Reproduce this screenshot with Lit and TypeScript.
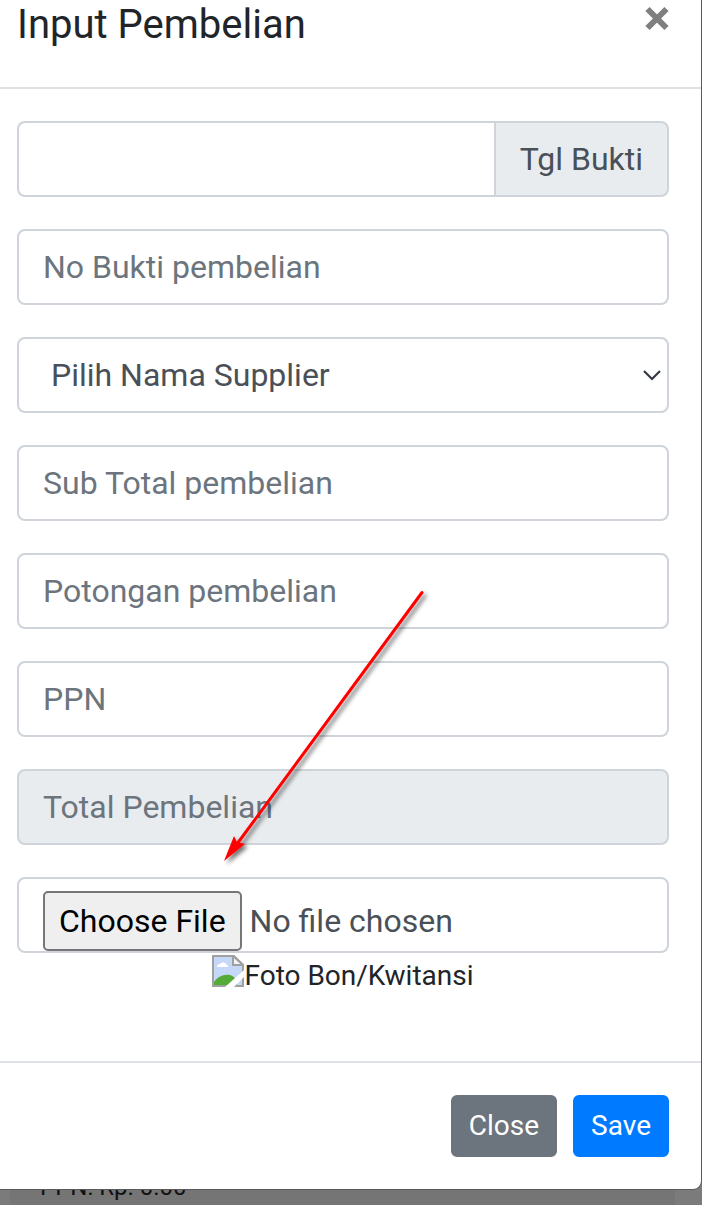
import { LitElement, html, css } from "lit";
import { customElement } from "lit/decorators.js";

@customElement("app-root")
export class AppRoot extends LitElement {
  static styles = css`
    :host {
      display: flex;
      flex-direction: column;
      position: relative;
      min-height: 100vh;
      overflow: hidden;
      box-sizing: border-box;
      background: #7b7b7b;
      color: #212529;
      font-family: Roboto, "Liberation Sans", sans-serif;
      font-size: 28px;
      line-height: 42px;
    }
    * {
      box-sizing: border-box;
    }
    .modal {
      position: relative;
      z-index: 1;
      margin-right: 1px;
      background: #fff;
      border-bottom-right-radius: 8px;
      box-shadow: 0 0 0 1px #5a5a5a;
    }
    .header {
      display: flex;
      justify-content: space-between;
      align-items: flex-start;
      height: 89px;
      padding-right: 32px;
      padding-left: 17px;
      border-bottom: 2px solid #dee2e6;
    }
    .title {
      margin: 0;
      font-size: 40px;
      font-weight: 400;
      line-height: 50px;
    }
    .dismiss {
      display: flex;
      padding: 6px 0;
      border: 0;
      background: none;
      color: #7f7f7f;
    }
    .body {
      display: flex;
      flex-direction: column;
      gap: 32px;
      padding: 32px 32px 64px 17px;
    }
    .control {
      display: block;
      width: 100%;
      min-width: 0;
      height: 76px;
      margin: 0;
      padding: 12px 24px;
      border: 2px solid #ced4da;
      border-radius: 8px;
      background: #fff;
      color: #495057;
      font: inherit;
      font-size: 32px;
      line-height: 48px;
      outline: 0;
    }
    .control::placeholder {
      color: #6c757d;
      opacity: 1;
    }
    .control:disabled {
      background: #e9ecef;
    }
    .group {
      display: flex;
    }
    .group .control {
      flex: 1;
      border-right: 0;
      border-radius: 8px 0 0 8px;
    }
    .addon {
      padding: 12px 24px;
      border: 2px solid #ced4da;
      border-radius: 0 8px 8px 0;
      background: #e9ecef;
      color: #495057;
      font-size: 32px;
      line-height: 48px;
    }
    .picker {
      display: grid;
      align-items: center;
    }
    .picker > * {
      grid-area: 1 / 1;
    }
    .select {
      appearance: none;
      padding-left: 32px;
    }
    .chevron {
      justify-self: end;
      margin-right: 7px;
      pointer-events: none;
    }
    .file {
      padding-bottom: 0;
      overflow: hidden;
    }
    .file::file-selector-button {
      height: 60px;
      margin: 0 8px 0 0;
      padding: 0 14px;
      border: 2px solid #767676;
      border-radius: 5px;
      background: #efefef;
      color: #000;
      font: inherit;
    }
    .preview {
      display: flex;
      justify-content: center;
      align-items: flex-start;
      padding-top: 2px;
    }
    .footer {
      display: flex;
      justify-content: flex-end;
      gap: 16px;
      padding: 32px 32px 32px 17px;
      border-top: 2px solid #dee2e6;
    }
    .btn {
      padding: 8px 16px;
      border: 2px solid #6c757d;
      border-radius: 6px;
      background: #6c757d;
      color: #fff;
      font: inherit;
    }
    .primary {
      border-color: #007bff;
      background: #007bff;
    }
    .behind {
      flex: 1 0 0;
      height: 38px;
      margin: -22px 27px 0 10px;
      padding-left: 30px;
      overflow: hidden;
      background: #757575;
      color: #111;
      font-size: 24px;
      line-height: 40px;
    }
    .navbar {
      position: absolute;
      top: 0;
      right: 0;
      width: 100%;
      height: 59px;
      background: #123047;
    }
    .arrow {
      position: absolute;
      z-index: 2;
      top: 580px;
      left: 210px;
      pointer-events: none;
    }
  `;

  render() {
    return html`
      <div class="navbar"></div>
      <form class="modal" @submit=${(e: Event) => e.preventDefault()}>
        <header class="header">
          <h5 class="title">Input Pembelian</h5>
          <button class="dismiss" type="button" aria-label="Close">
            <svg width="24" height="25" viewBox="0 0 24 25">
              <path d="M2.5 3 21.5 22M21.5 3 2.5 22" stroke="currentColor" stroke-width="6" />
            </svg>
          </button>
        </header>
        <div class="body">
          <div class="group">
            <input class="control" id="tgl" type="text" />
            <label class="addon" for="tgl">Tgl Bukti</label>
          </div>
          <input class="control" type="text" placeholder="No Bukti pembelian" aria-label="No Bukti pembelian" />
          <div class="picker">
            <select class="control select" aria-label="Supplier">
              <option>Pilih Nama Supplier</option>
            </select>
            <svg class="chevron" width="20" height="12" viewBox="0 0 20 12">
              <path d="M2 2 10 10 18 2" fill="none" stroke="#343a40" stroke-width="2.2" />
            </svg>
          </div>
          <input class="control" type="text" placeholder="Sub Total pembelian" aria-label="Sub Total pembelian" />
          <input class="control" type="text" placeholder="Potongan pembelian" aria-label="Potongan pembelian" />
          <input class="control" type="text" placeholder="PPN" aria-label="PPN" />
          <input class="control" type="text" placeholder="Total Pembelian" aria-label="Total Pembelian" disabled />
          <div>
            <input class="control file" type="file" aria-label="Foto Bon/Kwitansi" />
            <div class="preview">
              <svg width="32" height="32" viewBox="0 0 32 32">
                <path d="M1 1H22L31 10V31H1Z" fill="#c5d8f8" stroke="#a0a0a0" stroke-width="2" />
                <path d="M5 12a3 3 0 0 1 3-3 4 4 0 0 1 7 1 2 2 0 0 1 1 2Z" fill="#fff" />
                <path d="M2 30V27C7 19 20 16 25 26V30Z" fill="#55ab38" />
                <path d="M21 1V10H31Z" fill="#f4f4f4" stroke="#a0a0a0" stroke-width="2" />
                <path d="M13 32 32 15V22L22 32Z" fill="#fff" />
              </svg>
              <span>Foto Bon/Kwitansi</span>
            </div>
          </div>
        </div>
        <footer class="footer">
          <button class="btn" type="button">Close</button>
          <button class="btn primary" type="submit">Save</button>
        </footer>
      </form>
      <div class="behind">PPN: Rp. 0.00</div>
      <svg class="arrow" width="230" height="295" viewBox="210 580 230 295">
        <defs>
          <filter id="shade" x="-10%" y="-10%" width="120%" height="120%">
            <feDropShadow dx="3" dy="3" stdDeviation="2" flood-color="#000" flood-opacity="0.55" />
          </filter>
        </defs>
        <g filter="url(#shade)">
          <path d="M422 592.500 237 844" stroke="#f00" stroke-width="3" stroke-linecap="round" />
          <path d="M224 861 234 836 237 842 245 844Z" fill="#f00" />
        </g>
      </svg>
    `;
  }
}
